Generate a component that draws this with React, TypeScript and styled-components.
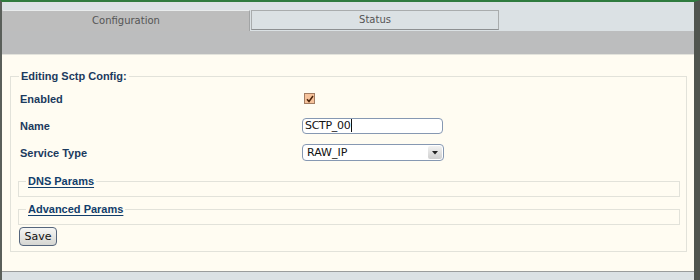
import React from "react";
import styled, { createGlobalStyle } from "styled-components";

const Global = createGlobalStyle`
  html, body { margin: 0; padding: 0; }
  body { background: #dbe1e4; font-family: "DejaVu Sans", sans-serif; }
`;

const Page = styled.div`
  box-sizing: border-box;
  width: 700px;
  height: 280px;
  border-top: 2px solid #2f7b3e;
  border-left: 2px solid #5a5f5a;
  border-right: 6px solid #50554f;
  background: #dbe1e4;
  display: flex;
  flex-direction: column;
  overflow: hidden;
`;

const TabBar = styled.div`
  height: 29px;
  padding-top: 8px;
  box-sizing: border-box;
  display: flex;
  align-items: flex-end;
`;

const Tab = styled.div<{ $active?: boolean }>`
  box-sizing: border-box;
  width: 248px;
  height: ${(p) => (p.$active ? 21 : 20)}px;
  margin-bottom: ${(p) => (p.$active ? 0 : 1)}px;
  margin-left: ${(p) => (p.$active ? 0 : 1)}px;
  background: ${(p) => (p.$active ? "#bdbdbd" : "#dbe1e4")};
  border: 1px solid ${(p) => (p.$active ? "#bdbdbd" : "#a9acad")};
  border-top-color: ${(p) => (p.$active ? "#e9eced" : "#a9acad")};
  border-right-color: ${(p) => (p.$active ? "#a2a4a5" : "#a9acad")};
  border-bottom: ${(p) => (p.$active ? "none" : "1px solid #8d9092")};
  font-family: "DejaVu Sans", sans-serif;
  font-size: 10px;
  color: #555;
  display: flex;
  align-items: center;
  justify-content: center;
  padding-bottom: ${(p) => (p.$active ? 2 : 1)}px;
`;

const Band = styled.div`
  height: 23px;
  background: #bcbdbe;
  border-bottom: 1px solid #e3e3dc;
`;

const Content = styled.div`
  background: #fffcf2;
  height: 217px;
  box-sizing: border-box;
  padding: 14px 7px 0 8px;
  border-bottom: 1px solid #9a9c9c;
`;

const Fieldset = styled.fieldset<{ $inner?: boolean }>`
  margin: 0;
  min-width: 0;
  border: 1px solid #e2e2da;
  padding: ${(p) => (p.$inner ? "0 0 8px 0" : "2px 6px 5px 7px")};
`;

const Legend = styled.legend<{ $link?: boolean }>`
  font-family: "Liberation Sans", Arial, sans-serif;
  font-weight: bold;
  font-size: 11px;
  line-height: 14px;
  color: ${(p) => (p.$link ? "#123e6b" : "#1b3a5e")};
  padding: 0 2px;
  margin-left: ${(p) => (p.$link ? 7 : 1)}px;
  text-decoration: ${(p) => (p.$link ? "underline" : "none")};
  text-underline-offset: 2px;
`;

const Grid = styled.div`
  display: grid;
  grid-template-columns: 284px 1fr;
  grid-auto-rows: 27px;
  align-items: center;
  margin-bottom: 8px;
`;

const Label = styled.div`
  font-family: "Liberation Sans", Arial, sans-serif;
  font-weight: bold;
  font-size: 11px;
  color: #1b3a5e;
  padding-left: 2px;
`;

const CheckBox = styled.span`
  box-sizing: border-box;
  display: flex;
  align-items: center;
  justify-content: center;
  width: 11px;
  height: 11px;
  margin-left: 2px;
  border: 1px solid #a27c62;
  background: #f6c29b;
`;

const TextInput = styled.div`
  box-sizing: border-box;
  width: 141px;
  height: 16px;
  border: 1px solid #8698b2;
  border-radius: 4px;
  background: #fff;
  font-family: "DejaVu Sans", sans-serif;
  font-size: 11px;
  line-height: 14px;
  letter-spacing: -0.3px;
  color: #111;
  padding-left: 2px;
  display: flex;
  align-items: center;
`;

const Caret = styled.span`
  display: inline-block;
  width: 1px;
  height: 13px;
  background: #111;
  margin-left: 1px;
`;

const Select = styled.div`
  box-sizing: border-box;
  width: 142px;
  height: 17px;
  border: 1px solid #8698b2;
  border-radius: 4px;
  background: #fff;
  font-family: "DejaVu Sans", sans-serif;
  font-size: 11px;
  color: #111;
  padding: 0 1px 0 4px;
  display: flex;
  align-items: center;
  justify-content: space-between;
`;

const Arrow = styled.span`
  width: 14px;
  height: 13px;
  border-radius: 2px;
  background: linear-gradient(#f2f2f2, #cfcfcf);
  display: flex;
  align-items: center;
  justify-content: center;
`;

const Stack = styled.div`
  display: flex;
  flex-direction: column;
  gap: 5px;
`;

const Button = styled.button`
  display: block;
  width: 38px;
  height: 19px;
  margin: 2px 0 0 1px;
  padding: 0;
  border: 1px solid #55657c;
  border-radius: 4px;
  background: linear-gradient(#f6f6f4, #d6d6d2);
  font-family: "DejaVu Sans", sans-serif;
  font-size: 11px;
  color: #111;
`;

export default function App() {
  return (
    <>
      <Global />
      <Page>
        <TabBar>
          <Tab $active>Configuration</Tab>
          <Tab>Status</Tab>
        </TabBar>
        <Band />
        <Content>
          <Fieldset>
            <Legend>Editing Sctp Config:</Legend>
            <Grid>
              <Label>Enabled</Label>
              <div>
                <CheckBox>
                  <svg width="8" height="8" viewBox="0 0 8 8">
                    <path d="M1 4.2 L3 6.5 L7 1" fill="none" stroke="#4a2208" strokeWidth="1.5" />
                  </svg>
                </CheckBox>
              </div>
              <Label>Name</Label>
              <div>
                <TextInput>
                  SCTP_00
                  <Caret />
                </TextInput>
              </div>
              <Label>Service Type</Label>
              <div>
                <Select>
                  RAW_IP
                  <Arrow>
                    <svg width="6" height="4" viewBox="0 0 6 4">
                      <path d="M0 0 L6 0 L3 3.5 Z" fill="#222" />
                    </svg>
                  </Arrow>
                </Select>
              </div>
            </Grid>
            <Stack>
              <Fieldset $inner>
                <Legend $link>DNS Params</Legend>
              </Fieldset>
              <Fieldset $inner>
                <Legend $link>Advanced Params</Legend>
              </Fieldset>
            </Stack>
            <Button>Save</Button>
          </Fieldset>
        </Content>
      </Page>
    </>
  );
}
